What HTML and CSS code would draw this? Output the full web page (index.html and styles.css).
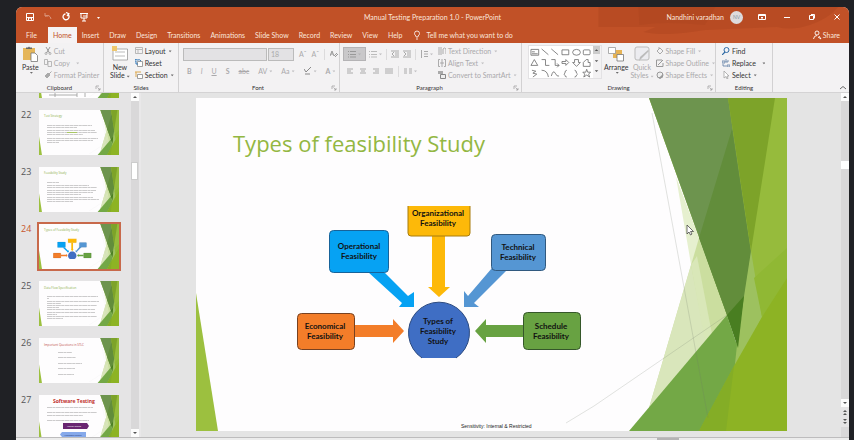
FILE: index.html
```html
<!DOCTYPE html>
<html lang="en">
<head>
<meta charset="utf-8">
<title>Manual Testing Preparation 1.0 - PowerPoint</title>
<link rel="stylesheet" href="styles.css">
</head>
<body>
<svg class="defs" aria-hidden="true">
  <symbol id="facet" viewBox="0 0 591 333" preserveAspectRatio="none">
    <rect width="591" height="333" fill="#fefdfe"/>
    <path d="M0 195L22 333H0z" fill="#9cc03f"/>
    <path d="M480 79L504 142L496 172z" fill="#e6f0cf"/>
    <path d="M503 140L532 217L453 310z" fill="#cbde9f"/>
    <path d="M495 167L510 243L453 310z" fill="#d9e6bb"/>
    <path d="M495 167L501 158L516 236L509 244z" fill="#d9e7b8"/>
    <path d="M453 0H591V333H538V270L541 245L531 217z" fill="#96bb3c"/>
    <path d="M453 0H532L555 155L548 205L541 245L531 217z" fill="#6d944e"/>
    <path d="M536 31L555 155L541 245L531 217L503 140z" fill="#628d3b"/>
    <path d="M532 0H579L555 153z" fill="#7da329"/>
    <path d="M555 153L566 219L538 275L532 260L541 244z" fill="#9dc15f"/>
    <path d="M591 150V195L566 219L558 180z" fill="#90b834"/>
    <path d="M531 217L541 247L538 275L505 333H433z" fill="#73a846"/>
    <path d="M531 217L548 198L542 250z" fill="#497e21"/>
    <path d="M591 180V333H503L538 268L566 219z" fill="#8db324"/>
    <path d="M538 268L530 333H503z" fill="#84ad26"/>
    <path d="M456 15L512 320M370 325L398 308L531 217" fill="none" stroke="#6f7a68" stroke-width=".7" opacity=".3"/>
  </symbol>
  <symbol id="radial" viewBox="100 105 290 160">
    <g stroke-width="1" stroke-linejoin="round">
      <path d="M236 138h13v51h5l-11 10l-11-10h4z" fill="#fdb909"/>
      <path d="M172 174h16l24 24l6-4v15h-15l3-4z" fill="#06a2f3"/>
      <path d="M296 170h17l-35 35l5 4h-15v-16l4 5z" fill="#5596d3"/>
      <path d="M157 227h40v-6l11 12l-11 12v-6h-40z" fill="#f37d29"/>
      <path d="M327 227h-37v-6l-11 12l11 12v-6h37z" fill="#68a242"/>
      <path d="M212 108h62v27q0 3-3 3h-56q-3 0-3-3z" fill="#fdb909"/>
      <path d="M212 108v27q0 3 3 3h56q3 0 3-3v-27" fill="none" stroke="#a87d0c"/>
      <rect x="133.500" y="132.500" width="59" height="42" rx="4" fill="#06a2f3" stroke="#17639a"/>
      <rect x="295.500" y="136.500" width="54" height="36" rx="4" fill="#5596d3" stroke="#31597f"/>
      <rect x="101.500" y="215.500" width="57" height="36" rx="4" fill="#f37d29" stroke="#774121"/>
      <rect x="327.500" y="214.500" width="57" height="37" rx="4" fill="#68a242" stroke="#35572a"/>
      <path d="M226 260a30.500 30.500 0 1 1 34 0z" fill="#3f6ec4"/>
      <path d="M226 260a30.500 30.500 0 1 1 34 0" fill="none" stroke="#2b4a80"/>
    </g>
  </symbol>
  <symbol id="up" viewBox="0 0 8 8"><path d="M2 5L4 3L6 5z" fill="#555"/></symbol>
  <symbol id="down" viewBox="0 0 8 8"><path d="M2 3H6L4 5z" fill="#555"/></symbol>
  <symbol id="launch" viewBox="0 0 6 6"><path d="M1 4V1H4M2.500 2.500L5 5M5 3V5H3" fill="none" stroke="#999" stroke-width=".7"/></symbol>
</svg>

<main class="window">
  <header class="titlebar">
    <svg class="art" viewBox="0 0 260 27" preserveAspectRatio="none" aria-hidden="true"><path d="M16 0H250Q240 12 222 18Q205 24 190 20Q150 22 120 23Q80 30 60 25L72 20H16z" fill="#a9441f" opacity=".4"/><path d="M55 0H130L120 18Q80 14 56 18z" fill="#a9441f" opacity=".35"/></svg>
    <div class="quick">
      <button aria-label="Save"><svg viewBox="0 0 10 10"><path d="M1.500 1.500h7v7h-7zM1.500 5.500h7M3.500 8v-2h3v2" fill="none" stroke="#fff"/></svg></button>
      <button aria-label="Undo" class="dim"><svg viewBox="0 0 10 10"><path d="M2 1v3h3M2 4q5-2 6 3" fill="none" stroke="#fff"/></svg></button>
      <button aria-label="Redo"><svg viewBox="0 0 10 10"><path d="M7.500 3a3 3 0 1 1-3-1.200M5 .5l2.800 1.200L6 4" fill="none" stroke="#fff" stroke-width="1.300"/></svg></button>
      <button aria-label="Start slide show"><svg viewBox="0 0 10 10"><path d="M1 1.500h8M2 2v4h6v-4M5 6v3M3 9h4M4 4h4" fill="none" stroke="#fff"/></svg></button>
      <button aria-label="Customize toolbar"><svg viewBox="0 0 10 10"><path d="M3 5h3L4.500 7z" fill="#fff"/></svg></button>
    </div>
    <h1>Manual Testing Preparation 1.0 - PowerPoint</h1>
    <div class="account">
      <span>Nandhini varadhan</span><span class="avatar">NV</span>
      <button aria-label="Ribbon display"><svg viewBox="0 0 10 10"><path d="M1.500 2.500h7v5h-7zM1.500 3.500h7M5 7V5M4 6l1-1 1 1" fill="none" stroke="#fff"/></svg></button>
      <button aria-label="Minimize"><svg viewBox="0 0 10 10"><path d="M2 5.500h6" stroke="#fff"/></svg></button>
      <button aria-label="Restore"><svg viewBox="0 0 10 10"><path d="M2.500 3.500h4v4h-4zM4 2.500h3.500v4" fill="none" stroke="#fff"/></svg></button>
      <button aria-label="Close"><svg viewBox="0 0 10 10"><path d="M2.500 2.500l5 5m0-5l-5 5" stroke="#fff"/></svg></button>
    </div>
  </header>
  <nav class="tabs">
    <a href="#">File</a><a href="#" class="on">Home</a><a href="#">Insert</a><a href="#">Draw</a><a href="#">Design</a><a href="#">Transitions</a><a href="#">Animations</a><a href="#">Slide Show</a><a href="#">Record</a><a href="#">Review</a><a href="#">View</a><a href="#">Help</a>
    <a href="#" class="tell"><svg viewBox="0 0 10 10"><path d="M4 7V6Q2.500 5 2.500 3.500a2.500 2.500 0 0 1 5 0Q7.500 5 6 6v1zM4 9h2" fill="none" stroke="#fff" stroke-width=".8"/></svg>Tell me what you want to do</a>
    <a href="#" class="share"><svg viewBox="0 0 10 10"><circle cx="5" cy="3" r="2" fill="none" stroke="#fff" stroke-width=".9"/><path d="M1.500 9Q2 5.500 5 5.500M6 7l3 2M7 6l2 3" fill="none" stroke="#fff" stroke-width=".9"/></svg>Share</a>
  </nav>

  <section class="ribbon">
    <div class="group">
      <div class="tools">
        <button class="big"><svg viewBox="0 0 16 16"><path d="M1 2h12v12H1z" fill="#e5b65a"/><path d="M4 3V1.500h2L7 .5l1 1h2V3z" fill="#666"/><path d="M9 7h4l2.500 2.500V15.500H9z" fill="#fff" stroke="#777" stroke-width=".8"/></svg>Paste<i class="caret"></i></button>
        <div class="stack off">
          <button><svg viewBox="0 0 8 8"><path d="M2 0l3.500 6M6 0L2.500 6" stroke="#999" fill="none"/><circle cx="2" cy="6.500" r="1" fill="none" stroke="#999" stroke-width=".7"/><circle cx="6" cy="6.500" r="1" fill="none" stroke="#999" stroke-width=".7"/></svg>Cut</button>
          <button><svg viewBox="0 0 8 8"><path d="M.5 .5h3v5h-3zM4 2.500h3.500v5H4z" fill="none" stroke="#aaa" stroke-width=".8"/></svg>Copy &nbsp;<i class="caret"></i></button>
          <button><svg viewBox="0 0 8 8"><path d="M1 5l3-3 2 2-3 3zM5 3l2.500-2.500" fill="#aaa" stroke="#aaa"/></svg>Format Painter</button>
        </div>
      </div>
      <h2>Clipboard</h2><svg class="launch"><use href="#launch"/></svg>
    </div>
    <div class="group">
      <div class="tools">
        <button class="big"><svg viewBox="0 0 16 16"><path d="M1 3h14.500v11H1z" fill="#fff" stroke="#999" stroke-width=".8"/><path d="M3 6h10M3 10h10" stroke="#bbb"/><path d="M0 0h5v5H0z" fill="#efc76d"/></svg>New<span>Slide<i class="caret"></i></span></button>
        <div class="stack">
          <button><svg viewBox="0 0 8 8"><path d="M.5 .5h7v6h-7zM1 2.500h6M3 3v3" fill="none" stroke="#aaa" stroke-width=".8"/></svg>Layout <i class="caret"></i></button>
          <button><svg viewBox="0 0 8 8"><path d="M2.500 2.500h5v5h-5z" fill="#fff" stroke="#888" stroke-width=".8"/><path d="M0 3V0l2 1q3-1 4 1M1 2v3h2" fill="none" stroke="#3379b8"/></svg>Reset</button>
          <button><svg viewBox="0 0 8 8"><path d="M2.500 3.500h5v4h-5z" fill="#fff" stroke="#888" stroke-width=".8"/><path d="M0 1h6M1 1v5" stroke="#dda84c"/></svg>Section <i class="caret"></i></button>
        </div>
      </div>
      <h2>Slides</h2>
    </div>
    <div class="group font">
      <div class="rows off">
        <div class="row"><select class="face" aria-label="Font"><option></option></select><select class="size" aria-label="Font size"><option>18</option></select><button>Aˆ</button><button>Aˇ</button><hr><button aria-label="Clear formatting"><svg viewBox="0 0 8 8"><path d="M0 6l2-5 2 5M1 4h2M4 6l3-3M5 7l3-3" fill="none" stroke="#999"/></svg></button></div>
        <div class="row wide"><button><b>B</b></button><button><em>I</em></button><button><u>U</u></button><button><b>S</b></button><button><s>abc</s></button><button>AV<i class="caret"></i></button><button>Aa<i class="caret"></i></button><button aria-label="Highlight"><svg viewBox="0 0 8 8"><path d="M0 2l2 3 5-5M1 7h5" fill="none" stroke="#888"/></svg><i class="caret"></i></button><button><b>A</b><i class="caret"></i></button></div>
      </div>
      <h2>Font</h2><svg class="launch"><use href="#launch"/></svg>
    </div>
    <div class="group para">
      <div class="tools off">
        <div class="rows">
          <div class="row"><button class="pressed" aria-label="Bullets"><svg viewBox="0 0 8 8"><path d="M0 1.500h1m1 0h6M0 4.500h1m1 0h6M0 7h1m1 0h6" stroke="#999"/></svg><i class="caret"></i></button><button aria-label="Numbering"><svg viewBox="0 0 8 8"><path d="M0 1.500h1m1 0h6M0 4.500h1m1 0h6M0 7h1m1 0h6" stroke="#bbb"/></svg><i class="caret"></i></button><hr><button aria-label="Decrease indent"><svg viewBox="0 0 8 8"><path d="M0 1h8M4 3h4M4 5h4M0 7h8M3 2L1 4l2 2" fill="none" stroke="#aaa"/></svg></button><button aria-label="Increase indent"><svg viewBox="0 0 8 8"><path d="M0 1h8M4 3h4M4 5h4M0 7h8M1 2l2 2-2 2" fill="none" stroke="#aaa"/></svg></button><hr><button aria-label="Line spacing"><svg viewBox="0 0 8 8"><path d="M1.500 0v8M4 1.500h4M4 4h4M4 6.500h4" stroke="#aaa"/></svg><i class="caret"></i></button></div>
          <div class="row align"><button aria-label="Left"><svg viewBox="0 0 8 8"><path d="M1 2h6M1 4h4M1 6h6" stroke="#aaa"/></svg></button><button aria-label="Center"><svg viewBox="0 0 8 8"><path d="M1 2h6M2 4h4M1 6h6" stroke="#aaa"/></svg></button><button aria-label="Right"><svg viewBox="0 0 8 8"><path d="M1 2h6M3 4h4M1 6h6" stroke="#aaa"/></svg></button><button aria-label="Justify"><svg viewBox="0 0 8 8"><path d="M0 2h8M0 4h8M0 6h8" stroke="#aaa"/></svg></button><hr><button aria-label="Columns"><svg viewBox="0 0 8 8"><path d="M0 2h3m2 0h3M0 4h3m2 0h3M0 6h3m2 0h3" stroke="#aaa"/></svg><i class="caret"></i></button></div>
        </div>
        <div class="stack">
          <button><svg viewBox="0 0 8 8"><path d="M1 0v8M3 0v8M5 7V2l1.500-1L8 2v5" fill="none" stroke="#aaa"/></svg>Text Direction <i class="caret"></i></button>
          <button><svg viewBox="0 0 8 8"><path d="M2 .5H.5v7H2M6 .5h1.500v7H6M4 0v8M2 4h4" fill="none" stroke="#999" stroke-width=".8"/></svg>Align Text <i class="caret"></i></button>
          <button><svg viewBox="0 0 8 8"><path d="M0 0h5v3H0z" fill="#aaa"/><path d="M2.500 3.500h5v4h-5z" fill="#eee" stroke="#888"/></svg>Convert to SmartArt <i class="caret"></i></button>
        </div>
      </div>
      <h2>Paragraph</h2><svg class="launch"><use href="#launch"/></svg>
    </div>
    <div class="group">
      <div class="tools draw">
        <div class="gallery">
          <svg viewBox="0 0 66 33" fill="none" stroke="#666" stroke-width=".8" role="img" aria-label="Shapes"><path d="M2 3.500h8v6H2zM3 6h3M3 8h6M13 3l7 6M23 3l7 6M34 4h7v5h-7z"/><ellipse cx="49" cy="6.500" rx="4" ry="3"/><rect x="56" y="4" width="7" height="5" rx="1"/><path d="M2 20l3.500-6L9 20zM13 14h4v6h4M23 14h4v6h4M29 18l2 2-2 2M34 16h4v-2l3 3-3 3v-2h-4zM47 14h4v3h2l-4 4-4-4h2zM56 21v-4l3-3h2v3h2v4zM3 25l4 1-3 2 4 1-4 3M13 25q6 0 7 7M23 31q2-7 4-3t4 3M39 25q-2 0-2 3l-1 1 1 1q0 2 2 2M47 25q2 0 2 3l1 1-1 1q0 2-2 2M59.500 24l1 3h3l-2 2 1 3-3-2-3 2 1-3-2-2h3z"/></svg>
          <div class="spin"><svg class="mut"><use href="#up"/></svg><svg><use href="#down"/></svg><svg><use href="#down"/></svg></div>
        </div>
        <button class="big"><svg viewBox="0 0 16 16"><path d="M5 4h9v8H5z" fill="#e6b355"/><path d="M.5 1.500h7v6h-7z" fill="#fff" stroke="#999" stroke-width=".8"/><path d="M9 8.500h6.500v6.500H9z" fill="#fff" stroke="#777" stroke-width=".8"/></svg>Arrange<i class="caret"></i></button>
        <button class="big mute"><svg viewBox="0 0 16 16"><rect x="1" y="1" width="14" height="13" rx="2" fill="#ececf0" stroke="#bbb"/><path d="M15 5l-7 7-3 3 1-4 8-7" fill="#bbb"/></svg>Quick<span>Styles<i class="caret"></i></span></button>
        <div class="stack off">
          <button><svg viewBox="0 0 8 8"><path d="M1 4l3-3 3 3-3 3zM3 2V0" fill="none" stroke="#aaa"/></svg>Shape Fill <i class="caret"></i></button>
          <button><svg viewBox="0 0 8 8"><path d="M6 1H.5v6.500H7V4M2 6l5-5" fill="none" stroke="#999"/></svg>Shape Outline <i class="caret"></i></button>
          <button><svg viewBox="0 0 8 8"><circle cx="4" cy="4" r="3" fill="#eee" stroke="#999"/><path d="M1 6q4 1 6-4v4L4 8z" fill="#999"/></svg>Shape Effects <i class="caret"></i></button>
        </div>
      </div>
      <h2>Drawing</h2><svg class="launch"><use href="#launch"/></svg>
    </div>
    <div class="group">
      <div class="tools">
        <div class="stack">
          <button><svg viewBox="0 0 8 8"><circle cx="4.500" cy="3" r="2.500" fill="none" stroke="#2e6aa5"/><path d="M3 5L0 8" stroke="#2e6aa5" stroke-width="1.200"/></svg>Find</button>
          <button><svg viewBox="0 0 8 8"><path d="M0 2h3v2H0zM4 0v3h2v-2M1 5v2h3M5 6h3v2H5z" fill="none" stroke="#5a7ca3" stroke-width=".8"/></svg>Replace &nbsp;<i class="caret"></i></button>
          <button><svg viewBox="0 0 8 8"><path d="M2 0v7l2-1.500L5 8l1-.5L5 5h2z" fill="#fff" stroke="#999" stroke-width=".7"/></svg>Select <i class="caret"></i></button>
        </div>
      </div>
      <h2>Editing</h2>
    </div>
    <button class="collapse" aria-label="Collapse the ribbon"><svg viewBox="0 0 8 8"><path d="M1 5l3-2.500L7 5" fill="none" stroke="#666"/></svg></button>
  </section>

  <section class="work">
    <ol class="thumbs">
      <li><span></span><svg viewBox="0 0 80 45"><use href="#facet"/><path d="M8 39h38v5M16 39v5M38 39v5M10 42h28" fill="none" stroke="#999" stroke-width=".8"/></svg></li>
      <li><span>22</span><svg viewBox="0 0 80 45"><use href="#facet"/><text x="5" y="7" class="th">Test Strategy</text><path class="ln" d="M8 15.500h45M8 17.500h30M8 20.500h48M8 22.500h50M8 24.500h36M8 28.500h51M8 30.500h46M8 32.500h12"/><path d="M28 22.500h10" stroke="#a8c763"/></svg></li>
      <li><span>23</span><svg viewBox="0 0 80 45"><use href="#facet"/><text x="5" y="7" class="th">Feasibility Study</text><path class="ln" d="M8 15.500h12M8 18.500h42M8 20.500h50M8 23.500h49M8 25.500h46M8 27.500h34M8 30.500h46M8 32.500h52M8 34.500h26"/></svg></li>
      <li class="on"><span>24</span><svg viewBox="0 0 80 45"><use href="#facet"/><text x="5" y="7" class="th">Types of Feasibility Study</text><use href="#radial" x="14" y="14" width="39" height="22"/></svg></li>
      <li><span>25</span><svg viewBox="0 0 80 45"><use href="#facet"/><text x="5" y="8" class="th">Data Flow Specification</text><path class="ln" d="M8 15.500h51M8 17.500h2M8 20.500h52M8 22.500h14M8 24.500h50M8 26.500h12M8 28.500h48M8 31.500h48M8 33.500h10M8 35.500h50M8 37.500h16"/></svg></li>
      <li><span>26</span><svg viewBox="0 0 80 45"><use href="#facet"/><text x="5" y="8" class="th red">Important Questions in STLC</text><path class="ln" d="M19 14.500h14M19 19.500h18M19 25.500h24M19 30.500h17M19 36.500h16"/></svg></li>
      <li><span>27</span><svg viewBox="0 0 80 45"><use href="#facet"/><text x="14" y="8" class="big-th">Software Testing</text><path class="ln" d="M8 12.500h46M8 17.500h50M8 20.500h36M8 25.500h42"/><path d="M24 28h24l2 3-2 3H24z" fill="#6a2671"/><path d="M23 37h24v5H23l-2-2.500z" fill="#86a9ea"/><text x="28" y="32" class="tiny">Manual Testing</text><text x="25" y="41" class="tiny dark">Automated Testing</text></svg></li>
    </ol>
    <div class="scroll left"><button aria-label="Scroll up"><svg><use href="#up"/></svg></button><i class="grip"></i><button aria-label="Scroll down" class="end"><svg><use href="#down"/></svg></button></div>
    <div class="stage">
      <svg class="slide" viewBox="0 0 591 333" role="img" aria-label="Types of feasibility Study">
        <use href="#facet"/>
        <text x="37" y="54" class="heading">Types of feasibility Study</text>
        <use href="#radial" x="100" y="105" width="290" height="160"/>
        <g class="label">
          <text x="242" y="118">Organizational</text><text x="242" y="128">Feasibility</text>
          <text x="163" y="151">Operational</text><text x="163" y="161">Feasibility</text>
          <text x="322" y="152">Technical</text><text x="322" y="162">Feasibility</text>
          <text x="129" y="231">Economical</text><text x="129" y="241">Feasibility</text>
          <text x="242" y="226">Types of</text><text x="242" y="236">Feasibility</text><text x="242" y="246">Study</text>
          <text x="355" y="231">Schedule</text><text x="355" y="241">Feasibility</text>
        </g>
        <text x="265" y="330" class="foot">Sensitivity: Internal &amp; Restricted</text>
        <path d="M491 127v9l2-2 1.500 3 1.500-1-1.500-2.500h3z" fill="#fff" stroke="#333" stroke-width=".7"/>
      </svg>
    </div>
    <div class="scroll right"><button aria-label="Previous"><svg><use href="#up"/></svg></button><i class="grip"></i><button aria-label="Next" class="end"><svg><use href="#down"/></svg></button>
      <button class="flat" aria-label="Previous slide"><svg viewBox="0 0 8 8"><path d="M2 4l2-2 2 2zM2 7l2-2 2 2z" fill="#555"/></svg></button><button class="flat" aria-label="Next slide"><svg viewBox="0 0 8 8"><path d="M2 1h4L4 3zM2 4h4L4 6z" fill="#555"/></svg></button></div>
  </section>
  <footer class="status"><i></i></footer>
</main>
</body>
</html>
```
FILE: styles.css
```css
* { box-sizing: border-box; }
body {
  margin: 0;
  height: 100vh;
  padding: 7px 5px 0 16px;
  background: #202125;
  font: 7px/10px Lato, "Open Sans", sans-serif;
  color: #333;
  overflow: hidden;
}
.defs { position: absolute; width: 0; height: 0; }
svg { display: block; flex: none; }
h1, h2 { margin: 0; font-weight: 400; }
button { border: 0; padding: 0; background: none; font: inherit; color: inherit; display: flex; align-items: center; white-space: nowrap; }
a { color: inherit; text-decoration: none; }
.window { height: 100%; display: flex; flex-direction: column; border-radius: 6px 6px 0 0; overflow: hidden; background: #e5e4e5; position: relative; }

.titlebar { background: #c15127; color: #fbe6dc; height: 20px; display: grid; grid-template-columns: 1fr auto 1fr; align-items: center; }
.titlebar h1 { font-size: 7px; z-index: 1; }
.art { position: absolute; top: 0; right: 0; width: 32%; height: 27px; }
.quick { display: flex; gap: 8px; padding-left: 9px; }
.quick svg, .account svg { width: 10px; height: 10px; }
.quick button:last-child { margin-left: -3px; }
.dim { opacity: .4; }
.account { display: flex; justify-content: flex-end; align-items: center; gap: 15px; padding-right: 7px; z-index: 1; }
.avatar { width: 13px; height: 13px; line-height: 13px; border-radius: 50%; background: #dedbdc; color: #8895a0; text-align: center; font-size: 5px; margin-left: -9px; margin-right: -1px; }

.tabs { background: #c15127; color: #fbe6dc; height: 16px; display: flex; align-items: stretch; line-height: 16px; padding-left: 5px; }
.tabs a { padding: 0 5px; z-index: 1; }
.tabs .on { background: #f5f3f4; color: #c15127; margin-left: 6px; }
.tabs svg { width: 10px; height: 10px; }
.tabs .tell, .tabs .share { display: flex; align-items: center; gap: 4px; }
.tabs .share { margin-left: auto; margin-right: 4px; gap: 1px; }

.ribbon { position: relative; height: 50px; flex: none; background: #f3f2f3; border-bottom: 1px solid #d4d3d4; display: grid; grid-template-columns: 88fr 75fr 161fr 182fr 194fr 57fr 76fr; }
.group { position: relative; min-width: 0; display: flex; flex-direction: column; border-right: 1px solid #d2d1d2; padding: 2px 0 0 6px; }
.group h2 { font-size: 6px; line-height: 8px; text-align: center; padding-right: 6px; margin-top: 1px; }
.launch { position: absolute; right: 2px; bottom: 1px; width: 6px; height: 6px; }
.tools { display: flex; height: 38px; gap: 5px; }
.draw { gap: 2px; }
.big { flex-direction: column; justify-content: flex-start; line-height: 8px; padding-top: 1px; }
.big svg { width: 16px; height: 16px; margin-bottom: 1px; }
.stack { display: grid; grid-template-rows: repeat(3, 12px); }
.stack button { gap: 2px; }
.stack svg, .row svg { width: 8px; height: 8px; }
.off, .mute { color: #aaa9ab; }
.caret { display: inline-block; width: 3px; height: 3px; margin-left: 2px; background: currentColor; clip-path: polygon(0 30%, 100% 30%, 50% 90%); vertical-align: middle; opacity: .7; }
.stack .caret { margin-left: 1px; }
.rows { height: 38px; display: grid; grid-template-rows: 18px 14px; gap: 1px; align-items: center; }
.row { display: flex; align-items: center; gap: 5px; }
.wide { gap: 9px; padding-left: 4px; }
.align { padding-left: 2px; }
.row hr { width: 1px; height: 11px; margin: 0; border: 0; background: #dcdbdc; }
.row select { appearance: none; height: 13px; border: 1px solid #bbb; border-radius: 0; background: #e3e2e4; color: #aaa; font: inherit; padding: 0 2px; }
.face { width: 84px; }
.size { width: 26px; margin-left: -4px; }
.font, .para { padding-left: 4px; }
.pressed { background: #c9c8ca; padding: 2px 4px; outline: 1px solid #b4b3b5; }
.para .tools { gap: 5px; }
.para .row { gap: 4px; }
.para .align { gap: 5px; }
.gallery { display: flex; align-self: start; background: #fff; height: 34px; border: 1px solid #e3e2e4; }
.gallery > svg { width: 64px; height: 32px; }
.spin { display: grid; width: 8px; background: #f3f2f3; }
.spin svg { width: 7px; height: 8px; }
.mut { background: #ccc; }
.collapse { position: absolute; right: 2px; bottom: 0; }
.collapse svg { width: 8px; height: 8px; }

.work { flex: 1; min-height: 0; display: grid; grid-template-columns: 115px 8px 1fr 8px; }
.thumbs { list-style: none; margin: 0; padding: 0 0 0 5px; overflow: hidden; min-height: 0; height: 100%; }
.thumbs li { display: grid; grid-template-columns: 18px 80px; height: 57px; font: 9px/10px "Open Sans", sans-serif; align-items: start; color: #555; }
.thumbs li:first-child { margin-top: -40px; }
.thumbs svg { width: 80px; height: 45px; }
.thumbs .on { color: #c8572f; }
.thumbs .on svg { outline: 2px solid #c8694b; }
.th { font-size: 3px; fill: #8bb04a; }
.red { fill: #c0504d; }
.big-th { font: 700 5px "Open Sans", sans-serif; fill: #c0302b; }
.tiny { font-size: 2px; fill: #fff; }
.tiny.dark { fill: #223a78; }
.ln { fill: none; stroke: #aaa; stroke-width: .6; stroke-dasharray: 5 .4 3 .4; }

.scroll { display: flex; flex-direction: column; background: #d9d8d9; min-height: 0; }
.scroll button { background: #fcfcfc; width: 8px; height: 8px; flex: none; }
.scroll svg { width: 8px; height: 8px; }
.grip { width: 7px; height: 18px; margin-top: 61px; background: #fff; border: 1px solid #ccc; }
.right .grip { height: 8px; width: 8px; border: 0; margin-top: 60px; }
.scroll .end { margin-top: auto; }
.scroll .flat { background: #e5e4e5; height: 10px; }
.scroll .flat:last-child { margin-bottom: 10px; }
.stage { background: #e4e4e4; border-left: 2px solid #e9e8e9; min-width: 0; min-height: 0; padding: 5px 0 6px; display: flex; justify-content: center; }
.slide { height: 100%; max-width: 100%; aspect-ratio: 591 / 333; }
.heading { font: 22px "Open Sans", sans-serif; fill: #93b742; }
.label { font: 700 8px Lato, sans-serif; text-anchor: middle; fill: #111; }
.foot { font: 5px "Liberation Sans", sans-serif; fill: #222; }
.status { height: 3px; flex: none; background: #ececec; border-top: 1px solid #bdbcbd; padding-left: 77%; }
.status i { display: block; width: 22px; height: 2px; background: #b5b4b5; }
```
